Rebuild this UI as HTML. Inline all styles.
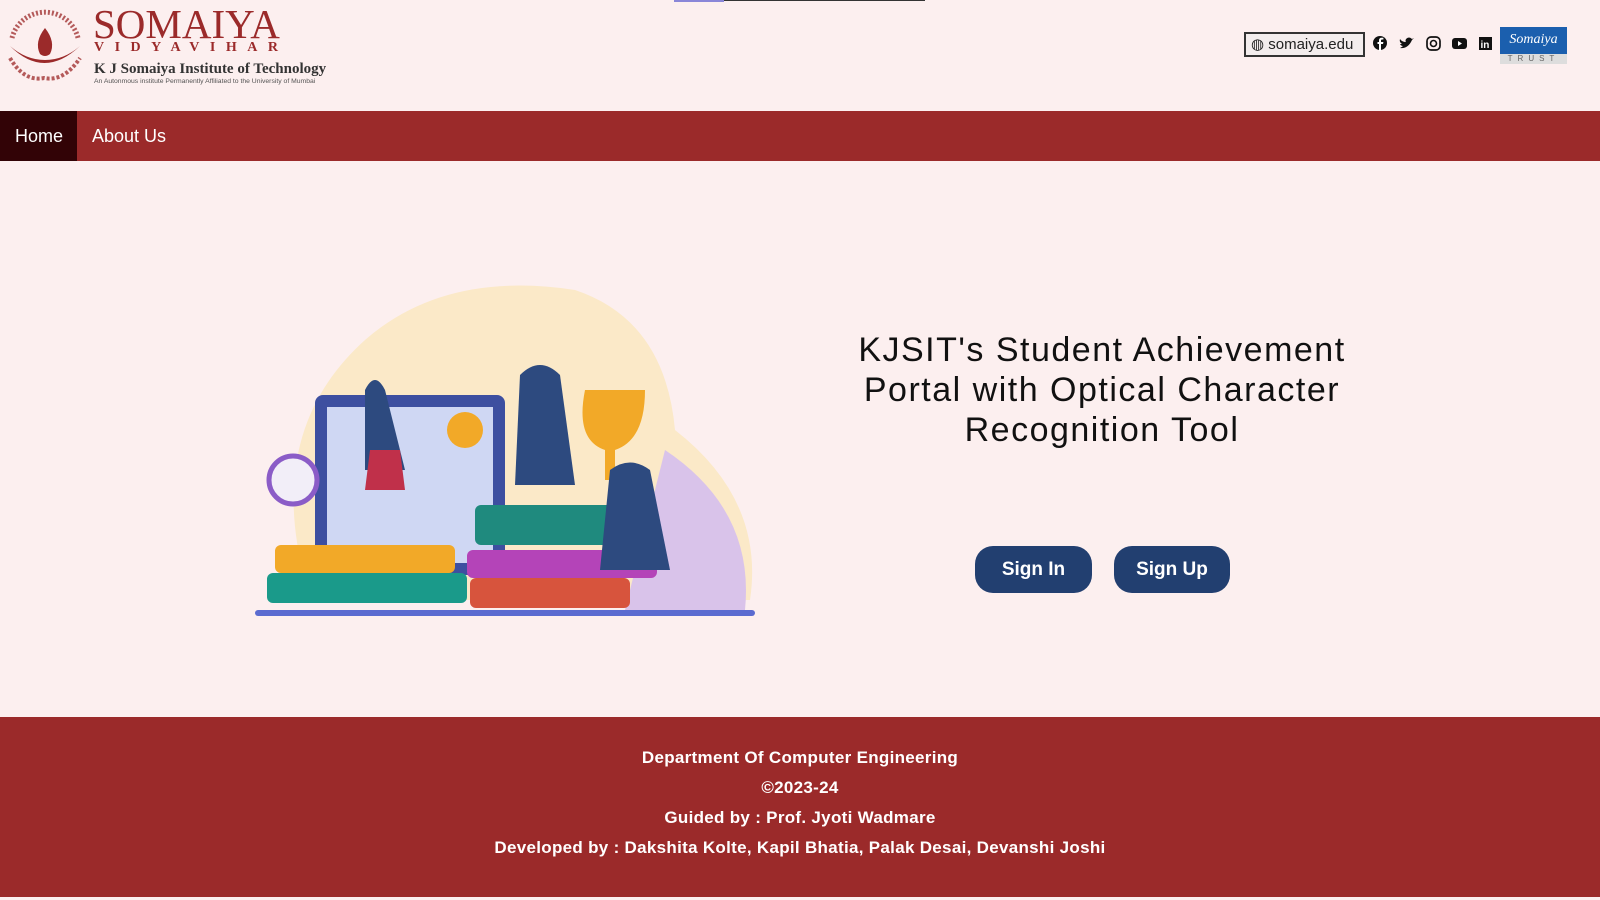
<!DOCTYPE html>
<html><head><meta charset="utf-8"><style>
*{margin:0;padding:0;box-sizing:border-box}
body{width:1600px;height:900px;background:#fcefef;font-family:"Liberation Sans",sans-serif;position:relative;overflow:hidden}
.hdr{height:111px;position:relative}
.nav{position:absolute;top:111px;left:0;width:1600px;height:50px;background:#9b2a2a}
.nav a{position:absolute;top:0;height:50px;line-height:50px;color:#fff;font-size:18px;text-decoration:none}
.foot{position:absolute;top:717px;left:0;width:1600px;height:180px;background:#9b2a2a;color:#fff;text-align:center;font-weight:bold;font-size:17px;letter-spacing:0.3px}
.foot div{position:absolute;left:0;width:1600px}
.title{position:absolute;left:837px;width:530px;top:330px;text-align:center;font-size:34px;line-height:40px;letter-spacing:1.5px;color:#111}
.btn{position:absolute;top:546px;height:47px;background:#223f70;color:#fff;border-radius:18px;font-weight:bold;font-size:19px;line-height:47px;text-align:center}
</style></head><body>
<div style="position:absolute;left:674px;top:0;width:50px;height:2px;background:#8a86d8"></div>
<div style="position:absolute;left:724px;top:0;width:201px;height:1px;background:#333"></div>
<div class="hdr">
<svg style="position:absolute;left:4px;top:8px" width="82" height="74" viewBox="0 0 82 74">
<path d="M6 38 Q40 72 76 38 Q60 52 41 52 Q22 52 6 38Z" fill="#9b2a2a"/>
<path d="M41 20 Q30 34 36 46 Q41 50 46 46 Q52 34 41 20Z" fill="#9b2a2a"/>
<path d="M8 30 A34 34 0 0 1 74 30" fill="none" stroke="#b45a5a" stroke-width="5" stroke-dasharray="2 2"/>
<path d="M6 50 Q20 74 40 70 Q60 74 76 50" fill="none" stroke="#b45a5a" stroke-width="4" stroke-dasharray="3 2"/>
</svg>
<div style="position:absolute;left:93px;top:5px;font-family:'Liberation Serif',serif;font-size:41px;color:#9b2a2a;line-height:38px">SOMAIYA</div>
<div style="position:absolute;left:94px;top:40px;font-family:'Liberation Serif',serif;font-weight:bold;font-size:14px;letter-spacing:10.5px;color:#9b2a2a">VIDYAVIHAR</div>
<div style="position:absolute;left:94px;top:61px;font-family:'Liberation Serif',serif;font-weight:bold;font-size:15px;color:#333">K J Somaiya Institute of Technology</div>
<div style="position:absolute;left:94px;top:78px;font-size:6.8px;color:#555">An Autonmous institute Permanently Affiliated to the University of Mumbai</div>
<div style="position:absolute;left:1244px;top:32px;width:121px;height:25px;border:2px solid #333;background:#f3eded;font-size:15px;line-height:21px;padding-left:5px;color:#222">◍ somaiya.edu</div>
<svg style="position:absolute;left:1372px;top:35px" width="120" height="18" viewBox="0 0 120 18">
<circle cx="8" cy="8" r="7" fill="#111"/><path d="M9 16V9h2l.4-2H9V5.5c0-.6.3-1 1-1h1.4V2.8H9.6C8 2.8 7 3.8 7 5.4V7H5.5v2H7v7" fill="#fff"/>
<path d="M28 13 Q36 14 40 5 L42 3 L40 4 Q37 1 34 4 Q33 6 34 7 Q30 7 28 4 Q27 7 30 9 L28 9 Q29 11 31 11 Q30 12 28 13Z" fill="#111"/>
<rect x="55" y="2" width="13" height="13" rx="4" fill="none" stroke="#111" stroke-width="1.7"/><circle cx="61.5" cy="8.5" r="3" fill="none" stroke="#111" stroke-width="1.6"/>
<rect x="80" y="3" width="15" height="11" rx="3" fill="#111"/><path d="M86 6v5l4-2.5z" fill="#fff"/>
<rect x="107" y="2" width="13" height="13" fill="#111"/><text x="108.5" y="13" font-size="10" font-weight="bold" fill="#fff" font-family="Liberation Sans">in</text>
</svg>
<div style="position:absolute;left:1500px;top:27px;width:67px;height:27px;background:#1b5fae;color:#fff;font-family:'Liberation Serif',serif;font-style:italic;font-size:14px;text-align:center;line-height:25px">Somaiya</div>
<div style="position:absolute;left:1500px;top:54px;width:67px;height:10px;background:#ddd;color:#666;font-size:8px;letter-spacing:5px;text-align:center;line-height:10px">TRUST</div>
</div>
<div class="nav"><div style="position:absolute;left:0;top:0;width:77px;height:50px;background:#320306"></div>
<a style="left:15px">Home</a><a style="left:92px">About Us</a></div>
<svg style="position:absolute;left:245px;top:280px" width="520" height="350" viewBox="0 0 520 350">
<path d="M60 300 Q20 150 120 60 Q200 -10 330 10 Q420 40 430 150 Q520 220 505 320 L60 320Z" fill="#fbe9c8"/>
<path d="M420 170 Q510 230 500 330 L380 330Z" fill="#d9c3ea"/>
<rect x="70" y="115" width="190" height="180" rx="8" fill="#3d4fa0"/>
<rect x="82" y="127" width="166" height="156" fill="#cfd7f3"/>
<circle cx="48" cy="200" r="24" fill="#f2eef8" stroke="#8b5cc7" stroke-width="5"/>
<rect x="30" y="265" width="180" height="28" rx="6" fill="#f2a928"/>
<rect x="22" y="293" width="200" height="30" rx="6" fill="#1a9a8a"/>
<rect x="222" y="270" width="190" height="28" rx="6" fill="#b444b8"/>
<rect x="225" y="298" width="160" height="30" rx="6" fill="#d7543d"/>
<rect x="230" y="225" width="150" height="40" rx="6" fill="#1f8a7e"/>
<rect x="10" y="330" width="500" height="6" rx="3" fill="#5b6bd0"/>
<path d="M340 110 h60 q0 50 -30 60 v30 h-10 v-30 q-30 -10 -20 -60z" fill="#f2a928"/>
<path d="M120 110 q10 -20 20 0 l20 80 l-40 0z" fill="#2d4a7f"/><path d="M125 170 l30 0 l5 40 l-40 0z" fill="#c0304a"/>
<path d="M275 95 q20 -20 40 0 l15 110 l-60 0z" fill="#2d4a7f"/>
<path d="M365 190 q20 -15 40 0 l20 100 l-70 0z" fill="#2d4a7f"/>
<circle cx="220" cy="150" r="18" fill="#f2a928"/>
</svg>
<div class="title">KJSIT's Student Achievement Portal with Optical Character Recognition Tool</div>
<div class="btn" style="left:975px;width:117px">Sign In</div>
<div class="btn" style="left:1114px;width:116px">Sign Up</div>
<div class="foot">
<div style="top:31px">Department Of Computer Engineering</div>
<div style="top:61px">©2023-24</div>
<div style="top:91px">Guided by : Prof. Jyoti Wadmare</div>
<div style="top:121px">Developed by : Dakshita Kolte, Kapil Bhatia, Palak Desai, Devanshi Joshi</div>
</div>
</body></html>
